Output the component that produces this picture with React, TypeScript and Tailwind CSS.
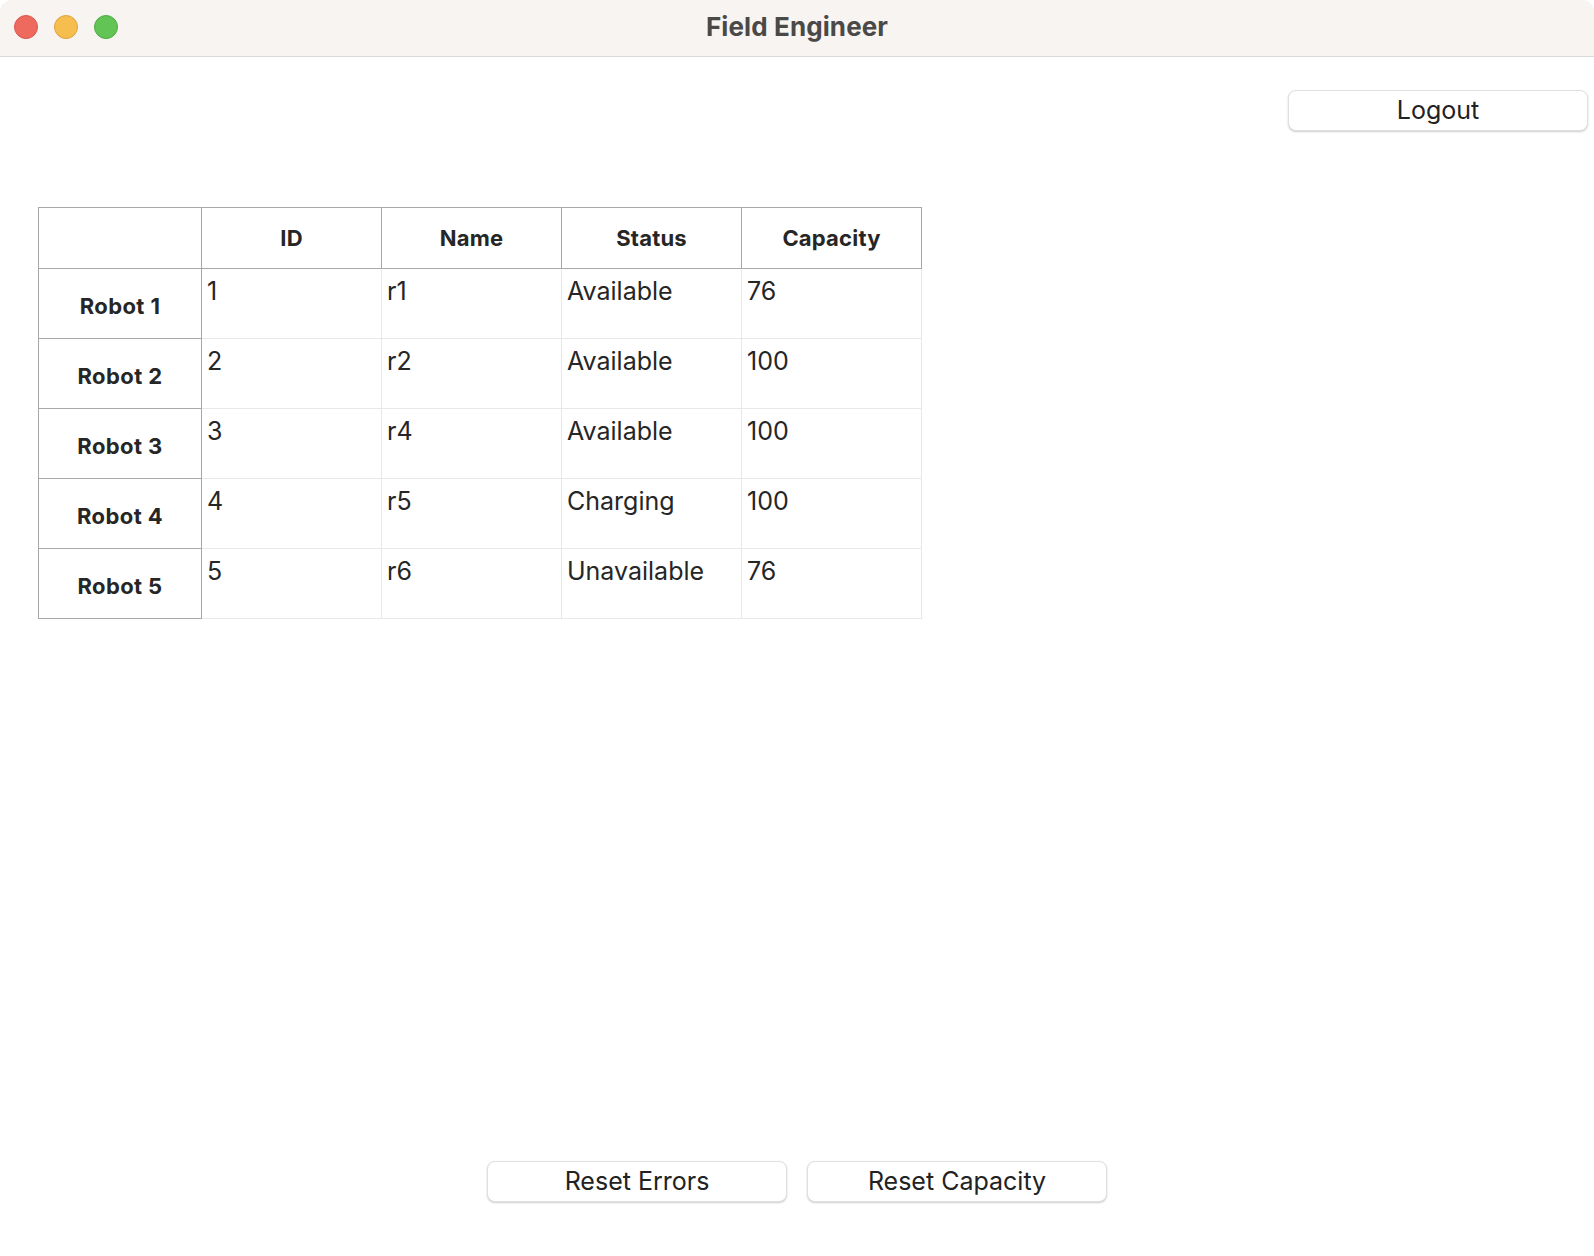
import React from "react";

const rows = [
  { label: "Robot 1", id: "1", name: "r1", status: "Available", cap: "76" },
  { label: "Robot 2", id: "2", name: "r2", status: "Available", cap: "100" },
  { label: "Robot 3", id: "3", name: "r4", status: "Available", cap: "100" },
  { label: "Robot 4", id: "4", name: "r5", status: "Charging", cap: "100" },
  { label: "Robot 5", id: "5", name: "r6", status: "Unavailable", cap: "76" },
];

const headers = ["ID", "Name", "Status", "Capacity"];

function Btn({ children }: { children: React.ReactNode }) {
  return (
    <button className="w-[300px] h-[41px] rounded-[8px] bg-white border border-[#e0e0e0] shadow-[0_1px_2px_rgba(0,0,0,0.2)] text-[25px] leading-[39px] text-[#222222] flex items-center justify-center">
      {children}
    </button>
  );
}

export default function App() {
  return (
    <div
      className="w-[1594px] h-[1256px] bg-white overflow-hidden rounded-[12px] flex flex-col"
      style={{ fontFamily: "Inter, 'Noto Sans', 'Liberation Sans', sans-serif" }}
    >
      {/* Title bar */}
      <div className="relative h-[57px] shrink-0 bg-[#f8f4f1] border-b border-[#d9d9d9] flex items-center justify-center pb-[4px]">
        <div className="absolute left-[14px] top-[15px] flex gap-[16px]">
          <div className="w-[24px] h-[24px] rounded-full bg-[#ee6a5f] border border-[#d8574d]" />
          <div className="w-[24px] h-[24px] rounded-full bg-[#f5be4f] border border-[#dea33a]" />
          <div className="w-[24px] h-[24px] rounded-full bg-[#61c454] border border-[#4fab43]" />
        </div>
        <div className="text-[26px] font-bold text-[#4b4948] tracking-[0.1px]">Field Engineer</div>
      </div>

      {/* Content */}
      <div className="flex-1 flex flex-col">
        <div className="flex justify-end pr-[6px] pt-[33px]">
          <Btn>Logout</Btn>
        </div>

        <div className="pl-[38px] pt-[76px]">
          <div className="inline-grid grid-cols-[163px_180px_180px_180px_180px] border-l border-t border-[#a8a8a8] text-[#262626]">
            <div className="h-[61px] border-r border-b border-[#a8a8a8]" />
            {headers.map((h) => (
              <div
                key={h}
                className="h-[61px] border-r border-b border-[#a8a8a8] flex items-center justify-center text-[22px] font-bold tracking-[0.2px]"
              >
                {h}
              </div>
            ))}
            {rows.map((r) => (
              <React.Fragment key={r.label}>
                <div className="h-[70px] border-r border-b border-[#a8a8a8] flex items-center justify-center pt-[6px] text-[22px] font-bold tracking-[0.4px]">
                  {r.label}
                </div>
                {[r.id, r.name, r.status, r.cap].map((v, i) => (
                  <div
                    key={i}
                    className="h-[70px] border-r border-b border-[#e8e8e8] pl-[5px] pt-[7px] text-[25px] leading-[30px]"
                  >
                    {v}
                  </div>
                ))}
              </React.Fragment>
            ))}
          </div>
        </div>

        <div className="mt-auto flex justify-center gap-[20px] pb-[54px]">
          <Btn>Reset Errors</Btn>
          <Btn>Reset Capacity</Btn>
        </div>
      </div>
    </div>
  );
}
